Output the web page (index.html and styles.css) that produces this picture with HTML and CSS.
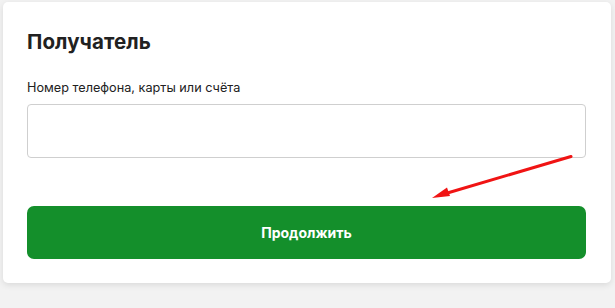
FILE: index.html
```html
<!DOCTYPE html>
<html lang="ru">
<head>
<meta charset="utf-8">
<link rel="stylesheet" href="styles.css">
</head>
<body>
<div class="page">
  <section class="card">
    <h2 class="title">Получатель</h2>
    <label class="label" for="acc">Номер телефона, карты или счёта</label>
    <input id="acc" class="field" type="text">
    <button class="btn">Продолжить</button>
    <svg class="arrow" width="615" height="308" viewBox="0 0 615 308">
      <line x1="571" y1="156.5" x2="444" y2="194" stroke="#f01414" stroke-width="3" stroke-linecap="round"/>
      <polygon points="432,198 447,187.5 450,196" fill="#f01414"/>
    </svg>
  </section>
</div>
</body>
</html>
```
FILE: styles.css
```css
html, body {
  margin: 0;
  padding: 0;
  background: #f2f2f2;
  width: 615px;
  height: 308px;
  overflow: hidden;
  font-family: Inter, "Open Sans", "Noto Sans", sans-serif;
}
.page {
  padding: 2px 4px 0 3px;
}
.card {
  background: #fff;
  border-radius: 5px;
  box-shadow: 0 2px 6px rgba(0,0,0,0.10);
  height: 281px;
  box-sizing: border-box;
  padding: 28px 25px 24px 24px;
  display: flex;
  flex-direction: column;
}
.title {
  margin: 0;
  font-size: 20.5px;
  line-height: 24px;
  font-weight: 700;
  color: #212121;
  letter-spacing: 0.1px;
}
.label {
  margin-top: 26px;
  font-size: 12.7px;
  line-height: 16px;
  color: #212121;
}
.field {
  margin-top: 8px;
  height: 54px;
  box-sizing: border-box;
  border: 1px solid #cfcfcf;
  border-radius: 4px;
  background: #fff;
  outline: none;
  padding: 0 12px;
}
.btn {
  margin-top: 48px;
  height: 54px;
  border: none;
  border-radius: 7px;
  background: #148f2b;
  color: #fff;
  font-family: inherit;
  font-size: 14px;
  font-weight: 700;
}
.arrow {
  position: absolute;
  left: 0;
  top: 0;
  pointer-events: none;
}
```
